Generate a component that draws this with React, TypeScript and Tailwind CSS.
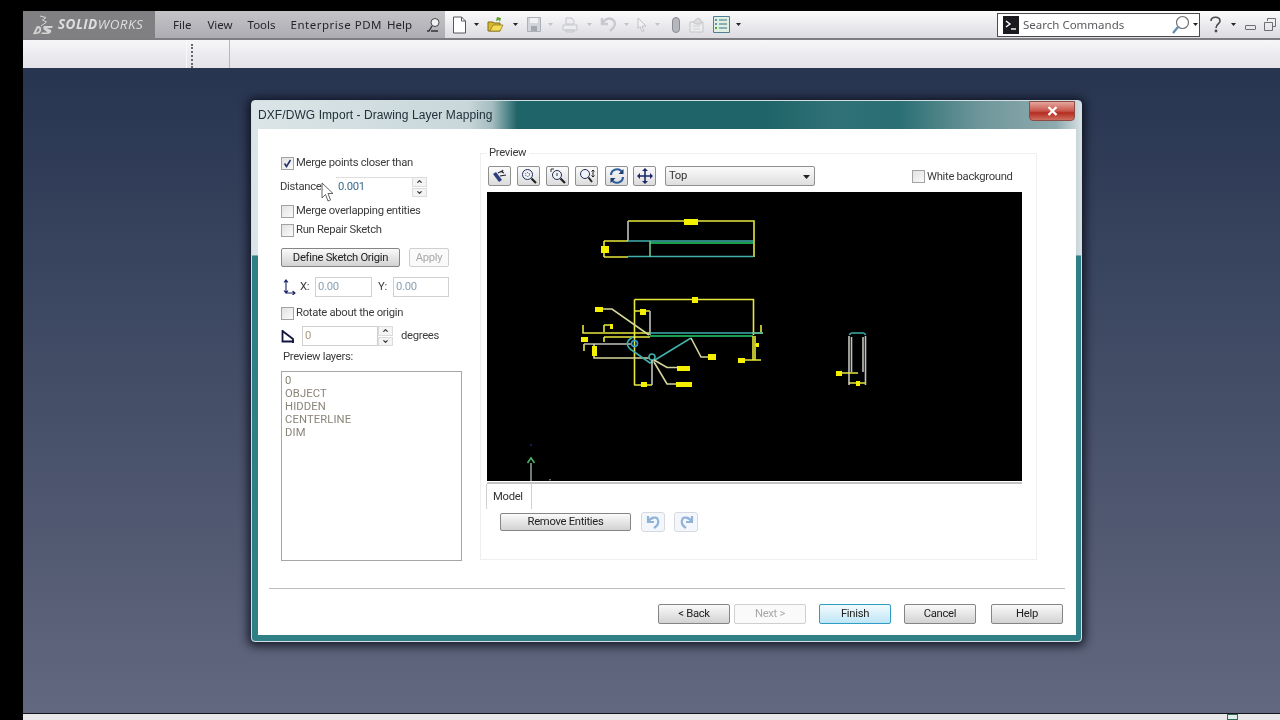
import { ReactNode } from "react";
import { ChevronDown, ChevronUp } from "lucide-react";

const Caret = ({ faded }: { faded?: boolean }) => (
  <svg width="5" height="3" viewBox="0 0 5 3" className="shrink-0">
    <path d="M0 0h5L2.5 3z" fill={faded ? "#c4c4c8" : "#222"} />
  </svg>
);

const Check = ({ checked }: { checked?: boolean }) => (
  <div className="flex h-[13px] w-[13px] shrink-0 items-center justify-center border border-[#a2a2a2] bg-gradient-to-br from-[#e2e2e2] to-[#fafafa]">
    {checked && (
      <svg width="9" height="9" viewBox="0 0 9 9">
        <path d="M1.5 4.5L3.5 7.5L7.5 1" fill="none" stroke="#27306b" strokeWidth="1.6" />
      </svg>
    )}
  </div>
);

const CheckRow = ({ label, checked }: { label: string; checked?: boolean }) => (
  <div className="flex h-[14px] items-center gap-[2px] whitespace-nowrap leading-[14px] text-[#3c3c3c]">
    <Check checked={checked} />
    <span>{label}</span>
  </div>
);

const Spinner = () => (
  <div className="flex h-[20px] w-[15px] shrink-0 flex-col gap-px">
    <div className="flex h-[9.5px] items-center justify-center border border-[#dcdcdc] bg-[#f4f4f4]">
      <ChevronUp size={7} strokeWidth={4} color="#333" />
    </div>
    <div className="flex h-[9.5px] items-center justify-center border border-[#dcdcdc] bg-[#f4f4f4]">
      <ChevronDown size={7} strokeWidth={4} color="#333" />
    </div>
  </div>
);

const Btn = ({ label, w, disabled, focus }: { label: string; w: string; disabled?: boolean; focus?: boolean }) => (
  <div
    className={
      w +
      " flex items-center justify-center whitespace-nowrap rounded-[2px] border pt-px " +
      (disabled
        ? "border-[#cfcfcf] bg-[#fafafa] text-[#a8a8a8]"
        : focus
          ? "border-[#2f9cc4] bg-gradient-to-b from-[#f2fafd] to-[#bfe6f6] text-[#222]"
          : "border-[#858585] bg-gradient-to-b from-[#fafafa] to-[#d2d2d2] text-[#222]")
    }
  >
    {label}
  </div>
);

const ToolBtn = ({ children }: { children: ReactNode }) => (
  <div className="flex h-[20px] w-[23px] shrink-0 items-center justify-center rounded-[2px] border border-[#8f8f8f] bg-gradient-to-b from-[#fbfbfb] to-[#dcdcdc]">
    {children}
  </div>
);

const Logo = () => (
  <div className="flex h-[27px] w-[132px] shrink-0 items-center bg-[#808083] pl-[9px]">
    <svg width="22" height="20" viewBox="0 0 22 20" className="shrink-0">
      <path d="M8 1L14 2.5L10.5 5L14.5 7L9 11" fill="none" stroke="#d4d4d4" strokeWidth="1" />
      <path d="M1 19L5 11H6C10 11 10 16 7.5 18C6 19 3 19.5 1 19zM4 17.5C6 17.5 7.5 16 7.5 14L6 13z" fill="#d4d4d4" fillRule="evenodd" />
      <path d="M12 11H21L20 13H14.5L19 15C20 17 18 19 15 19H9L10 17.5H15.5L11.5 14C11 12.5 11.5 11.5 12 11z" fill="#d4d4d4" />
    </svg>
    <span className="ml-[4px] mt-px whitespace-nowrap font-['Open_Sans',sans-serif] text-[13.5px] italic leading-none tracking-[0.45px] text-[#dedede]">
      <span className="font-bold">SOLID</span>WORKS
    </span>
  </div>
);

const TopToolbar = () => (
  <div className="flex h-[27px] flex-1 items-center bg-gradient-to-b from-[#fbfbfc] to-[#dcdce1] pl-[7px] pr-[4px]">
    <svg width="15" height="18" viewBox="0 0 15 18" className="shrink-0">
      <path d="M1.5 1h8l4 4v12h-12z" fill="#fff" stroke="#55585f" />
      <path d="M9.5 1v4h4" fill="none" stroke="#55585f" />
    </svg>
    <div className="ml-[7px]"><Caret /></div>
    <svg width="17" height="17" viewBox="0 0 17 17" className="ml-[8px] shrink-0">
      <path d="M1 6h5l1 1h6v8H1z" fill="#d8b92e" stroke="#846d18" />
      <path d="M3 15l3-6h10l-3 6z" fill="#f5dc58" stroke="#846d18" strokeWidth=".7" />
      <path d="M10 1l4 1-1 4-1-2-3 1z" fill="#56a32c" />
    </svg>
    <div className="ml-[9px]"><Caret /></div>
    <svg width="14" height="15" viewBox="0 0 14 15" className="ml-[9px] shrink-0">
      <path d="M.5.5h13v14H.5z" fill="#d2d4da" stroke="#aeb0b8" />
      <path d="M3 1h8v5H3z" fill="#f0f1f3" />
      <path d="M4 9h6v5H4z" fill="#a4a7ae" />
    </svg>
    <div className="ml-[7px]"><Caret faded /></div>
    <svg width="16" height="16" viewBox="0 0 16 16" className="ml-[9px] shrink-0">
      <path d="M4 1h6l2 3v3H4z M1 8h14v5H1z" fill="#ecedf0" stroke="#c4c5ca" />
      <path d="M4 13h8v2H4z" fill="#dddee2" stroke="#c4c5ca" />
    </svg>
    <div className="ml-[9px]"><Caret faded /></div>
    <svg width="17" height="15" viewBox="0 0 17 15" className="ml-[8px] shrink-0">
      <path d="M2 1v6h6M2 7c3-6 9-7 12-3 2 3 0 7-4 10" fill="none" stroke="#c8c9ce" strokeWidth="2.4" />
    </svg>
    <div className="ml-[7px]"><Caret faded /></div>
    <svg width="11" height="15" viewBox="0 0 11 15" className="ml-[8px] shrink-0">
      <path d="M1 1l8 8H5l2 5-2 .5-2-5-2 2z" fill="#f0f2f5" stroke="#c0c2c8" />
    </svg>
    <div className="ml-[7px]"><Caret faded /></div>
    <div className="ml-[12px] h-[16px] w-[8px] shrink-0 rounded-[4px] border border-[#8a8c92] bg-[#b6b8be]" />
    <svg width="17" height="16" viewBox="0 0 17 16" className="ml-[8px] shrink-0">
      <path d="M2 5h13v10H2z" fill="#eceded" stroke="#c4c5c8" />
      <path d="M5 5l5-4 3 2v4H8z" fill="#dcdde0" stroke="#c4c5c8" />
      <path d="M5 9h7M5 12h7" stroke="#cfd0d3" />
    </svg>
    <svg width="17" height="17" viewBox="0 0 17 17" className="ml-[8px] shrink-0">
      <path d="M.5.5h16v16H.5z" fill="#dff0e2" stroke="#4f7f95" />
      <path d="M6 4h8M6 8h8M6 12h8" stroke="#3d6c86" />
      <path d="M2 3h2v2H2zM2 7h2v2H2z" fill="#5a9bb7" />
      <path d="M2 11h2v2H2z" fill="#4aa83a" />
    </svg>
    <div className="ml-[6px]"><Caret /></div>
    <div className="flex-1" />
    <div className="flex h-[24px] w-[203px] shrink-0 items-center border border-[#4b4b4f] bg-white pl-[5px]">
      <div className="flex h-[18px] w-[16px] shrink-0 items-center justify-center bg-[#1b1b1f]">
        <svg width="12" height="12" viewBox="0 0 12 12">
          <path d="M1 2l4 3-4 3" fill="none" stroke="#fff" strokeWidth="1.4" />
          <path d="M6 10h5" stroke="#fff" strokeWidth="1.4" />
        </svg>
      </div>
      <span className="ml-[4px] w-[129px] shrink-0 whitespace-nowrap font-['Noto_Sans',sans-serif] text-[11.5px] text-[#5a5a5e]">Search Commands</span>
      <svg width="19" height="20" viewBox="0 0 19 20" className="ml-[19px] shrink-0">
        <circle cx="11.5" cy="7.5" r="6" fill="#fff" stroke="#6f7276" strokeWidth="1.2" />
        <path d="M7 12l-5 6" stroke="#5d8db3" strokeWidth="2.2" />
      </svg>
      <div className="ml-[3px]"><Caret /></div>
    </div>
    <svg width="13" height="17" viewBox="0 0 13 17" className="ml-[9px] shrink-0">
      <path d="M2 5c0-5 9-5 9 0 0 3-4 3-4 7" fill="none" stroke="#4a4a4e" strokeWidth="1.6" />
      <circle cx="7" cy="15" r="1.4" fill="#4a4a4e" />
    </svg>
    <div className="ml-[9px]"><Caret /></div>
    <div className="ml-[9px] mt-[6px] h-[5px] w-[11px] shrink-0 rounded-[1px] border border-[#6d6d72]" />
    <svg width="12" height="14" viewBox="0 0 12 14" className="ml-[8px] shrink-0">
      <path d="M3.5 3V.5h8v8H9M.5 4.5h8v8h-8z" fill="none" stroke="#6d6d72" />
    </svg>
  </div>
);

const Blk = ({ x, y, w, h }: { x: number; y: number; w: number; h: number }) => (
  <rect x={x} y={y} width={w} height={h} fill="#f5f000" />
);

const Preview = () => {
  const Y = "#e8e83c";
  const B = "#d6d69c";
  const G = "#c0c3ba";
  const T = "#3fb0ac";
  const E = "#22d36a";
  return (
    <svg viewBox="487 192 535 289" className="ml-[-1px] mt-[6px] block h-[289px] w-[535px] shrink-0 bg-black" fill="none" strokeWidth="1.6">
      {/* top view */}
      <path d="M628 221H754V257" stroke={Y} />
      <path d="M628 221V241" stroke={G} />
      <path d="M604 241V257M604 241H628M604 257H628" stroke={Y} />
      <path d="M628 241H753M628 256.5H753" stroke={T} />
      <path d="M650 243H753" stroke={E} />
      <path d="M650 241V257" stroke="#6fc48e" />
      <Blk x={684} y={219} w={14} h={6} />
      <Blk x={601} y={246} w={8} h={7} />
      {/* front view */}
      <path d="M634.5 299.5H753.5V335M634.5 299.5V385M583 325V333H650M604 325V332M604 325H612M612 324V329" stroke={Y} />
      <path d="M763 333H752M761 325V333M604 337V342M604 337H650M584 344V351M634 311H650" stroke={Y} />
      <path d="M603 309H612L649 335" stroke={B} />
      <path d="M650 311V335M584 344H632" stroke={G} />
      <path d="M594 344V358H649" stroke={B} />
      <path d="M650 333H763" stroke={T} />
      <path d="M650 336H753" stroke={E} />
      <circle cx="634.5" cy="343.5" r="3" stroke="#2f9fe0" />
      <circle cx="652" cy="357" r="3" stroke={T} />
      <path d="M633 337C625 341 626 347 633 351L650 363L691 338" stroke={T} />
      <path d="M691 338L701 357H708M654 360L667 367.5H677M654 362L667 384H676" stroke={B} />
      <path d="M652 360V385" stroke={G} />
      <path d="M634 385H652M753 336V360M755 336V360M745 360H761M755 345H759" stroke={Y} />
      <Blk x={595} y={307} w={8} h={5} />
      <Blk x={640} y={309} w={6} h={6} />
      <Blk x={692} y={297} w={6} h={6} />
      <Blk x={610} y={324} w={3} h={5} />
      <Blk x={581} y={337} w={7} h={5} />
      <Blk x={592} y={346} w={5} h={10} />
      <Blk x={708} y={354} w={8} h={6} />
      <Blk x={677} y={366} w={13} h={5} />
      <Blk x={676} y={382} w={16} h={5} />
      <Blk x={641} y={382} w={6} h={5} />
      <Blk x={738} y={358} w={7} h={5} />
      <Blk x={756} y={343} w={3} h={4} />
      {/* side view */}
      <path d="M849 336V385M865.5 336V385M851.5 337V372M863 337V372" stroke={G} />
      <path d="M849.5 335Q850 333 852 333H863Q865 333 865.5 335" stroke={T} />
      <path d="M842 373H858M849 383H865" stroke={Y} />
      <Blk x={836} y={371} w={6} h={5} />
      <Blk x={856} y={381} w={4} h={5} />
      {/* origin */}
      <path d="M531 463V481" stroke="#8f9a90" />
      <path d="M527.5 463L531 458L534.5 463" stroke="#4fae67" />
      <rect x="530" y="444" width="2" height="2" fill="#0c1c5c" />
      <rect x="549" y="479" width="2" height="1.5" fill="#666" />
    </svg>
  );
};

const LeftColumn = () => (
  <div className="w-[181px] shrink-0 pt-[27px]">
    <CheckRow label="Merge points closer than" checked />
    <div className="relative mt-[7px] flex h-[20px] items-center text-[#3c3c3c]">
      <span className="ml-[-1px] w-[56px]">Distance:</span>
      <div className="flex h-[20px] w-[76px] items-center border-t border-[#dedede] pl-[2px] text-[#3d6c8e]">0.001</div>
      <Spinner />
      {/* cursor */}
      <svg width="13" height="21" viewBox="0 0 13 21" className="absolute left-[40px] top-[5px]">
        <path d="M1 1V16L4.5 12.5L7 19L9.5 18L7 11.5H12z" fill="#fff" fillOpacity=".75" stroke="#555" strokeWidth=".9" />
      </svg>
    </div>
    <div className="mt-[7px]"><CheckRow label="Merge overlapping entities" /></div>
    <div className="mt-[5px]"><CheckRow label="Run Repair Sketch" /></div>
    <div className="mt-[11px] flex h-[19px] gap-[9px]">
      <Btn label="Define Sketch Origin" w="w-[119px]" />
      <Btn label="Apply" w="w-[40px]" disabled />
    </div>
    <div className="mt-[10px] flex h-[20px] items-center text-[#3c3c3c]">
      <svg width="14" height="16" viewBox="0 0 14 16" className="ml-px shrink-0">
        <path d="M4 1V14H13M2 3.5L4 1L6 3.5M2 11.5L4 14L6 11.5M10.5 12L13 14L10.5 16" fill="none" stroke="#1b2466" strokeWidth="1.1" />
      </svg>
      <span className="ml-[4px] w-[15px] shrink-0">X:</span>
      <div className="flex h-[20px] w-[57px] shrink-0 items-center border border-[#d0d0d0] pl-[2px] text-[#8fa3b3]">0.00</div>
      <span className="ml-[6px] w-[15px] shrink-0">Y:</span>
      <div className="flex h-[20px] w-[56px] shrink-0 items-center border border-[#d0d0d0] pl-[2px] text-[#8fa3b3]">0.00</div>
    </div>
    <div className="mt-[9px]"><CheckRow label="Rotate about the origin" /></div>
    <div className="mt-[6px] flex h-[20px] items-center text-[#3c3c3c]">
      <svg width="14" height="15" viewBox="0 0 14 15" className="shrink-0">
        <path d="M1.5 1V12.5H13M1.5 2L12 10V14" fill="none" stroke="#14143c" strokeWidth="1.8" />
      </svg>
      <div className="ml-[7px] flex h-[20px] w-[76px] shrink-0 items-center border border-[#d0d0d0] pl-[2px] text-[#a89a80]">0</div>
      <Spinner />
      <span className="ml-[8px]">degrees</span>
    </div>
    <div className="mt-[4px] h-[14px] pl-[2px] leading-[14px] text-[#3c3c3c]">Preview layers:</div>
    <div className="mt-[7px] h-[190px] border border-[#a6a6a6] px-[3px] pt-[2px] leading-[13px] tracking-[0.1px] text-[#8a8578]">
      <div>0</div>
      <div>OBJECT</div>
      <div>HIDDEN</div>
      <div>CENTERLINE</div>
      <div>DIM</div>
    </div>
  </div>
);

const PreviewPanel = () => (
  <div className="relative ml-[18px] mt-[24px] h-[407px] w-[557px] shrink-0 border border-[#efefef] pl-[7px] pt-[12px]">
    <div className="absolute left-[5px] top-[-8px] bg-white px-[3px] leading-[14px] text-[#3c3c3c]">Preview</div>
    <div className="flex h-[20px] items-center">
      <ToolBtn>
        <svg width="16" height="16" viewBox="0 0 16 16">
          <path d="M1 6l6 8 3-2-6-8z" fill="#2c3f7c" />
          <path d="M6 5l4-2M8 8l6-1M11 2l-1 2 2 1" fill="none" stroke="#223" strokeWidth="1.2" />
        </svg>
      </ToolBtn>
      <div className="ml-[6px]">
        <ToolBtn>
          <svg width="16" height="16" viewBox="0 0 16 16">
            <circle cx="6.5" cy="6.5" r="5" fill="#eef3f7" stroke="#222d55" />
            <circle cx="6.5" cy="6.5" r="2" fill="none" stroke="#444" strokeDasharray="1 1" />
            <path d="M10.5 10.5L15 15" stroke="#222" strokeWidth="2.2" />
          </svg>
        </ToolBtn>
      </div>
      <div className="ml-[6px]">
        <ToolBtn>
          <svg width="16" height="16" viewBox="0 0 16 16">
            <circle cx="7" cy="7" r="4.5" fill="#eef3f7" stroke="#222d55" />
            <path d="M1 1h3M1 1v3M7 5v3" fill="none" stroke="#333" />
            <path d="M10.5 10.5L15 15" stroke="#222" strokeWidth="2.2" />
          </svg>
        </ToolBtn>
      </div>
      <div className="ml-[6px]">
        <ToolBtn>
          <svg width="16" height="16" viewBox="0 0 16 16">
            <circle cx="6" cy="6" r="4.5" fill="#eef3f7" stroke="#222d55" />
            <path d="M9.5 9.5L13 14" stroke="#222" strokeWidth="2" />
            <path d="M14 2v7M12.5 3.5L14 2l1.5 1.5M12.5 7.5L14 9l1.5-1.5" fill="none" stroke="#222" />
          </svg>
        </ToolBtn>
      </div>
      <div className="ml-[7px]">
        <ToolBtn>
          <svg width="16" height="16" viewBox="0 0 16 16">
            <path d="M2 7A6 6 0 0 1 13 4" fill="none" stroke="#2f5f9e" strokeWidth="2.2" />
            <path d="M14 9A6 6 0 0 1 3 12" fill="none" stroke="#2f5f9e" strokeWidth="2.2" />
            <path d="M14.5 1v5h-5zM1.5 15v-5h5z" fill="#1f3d73" />
          </svg>
        </ToolBtn>
      </div>
      <div className="ml-[5px]">
        <ToolBtn>
          <svg width="16" height="16" viewBox="0 0 16 16">
            <path d="M8 1v14M1 8h14" stroke="#1a2a66" strokeWidth="1.6" />
            <path d="M8 0l3 3H5zM8 16l3-3H5zM0 8l3-3v6zM16 8l-3-3v6z" fill="#1a2a66" />
          </svg>
        </ToolBtn>
      </div>
      <div className="ml-[9px] flex h-[20px] w-[150px] shrink-0 items-center justify-between rounded-[2px] border border-[#8f8f8f] bg-gradient-to-b from-[#fbfbfb] to-[#dedede] pl-[3px] pr-[4px] pt-px text-[#333]">
        <span>Top</span>
        <svg width="7" height="4" viewBox="0 0 7 4"><path d="M0 0h7L3.5 4z" fill="#222" /></svg>
      </div>
      <div className="ml-[97px] mt-px"><CheckRow label="White background" /></div>
    </div>
    <Preview />
    <div className="ml-[-1px] mt-[1px] h-[2px] w-[535px] bg-[#c4c4c4]" />
    <div className="ml-[-2px] flex h-[25px] w-[46px] items-center border-l border-r border-[#d0d0d0] pl-[6px] pt-[2px] text-[#333]">Model</div>
    <div className="ml-[12px] mt-[3px] flex h-[20px] items-center">
      <Btn label="Remove Entities" w="w-[131px] h-[18px]" />
      <div className="ml-[10px] flex h-[20px] w-[24px] items-center justify-center rounded-[3px] border border-[#d6d9de] bg-[#f3f6fa]">
        <svg width="15" height="15" viewBox="0 0 15 15">
          <path d="M2 1v6h6M2 7c3-5 9-6 10-2 1 3-1 6-4 8" fill="none" stroke="#8fb2d8" strokeWidth="2.2" />
        </svg>
      </div>
      <div className="ml-[9px] flex h-[20px] w-[24px] items-center justify-center rounded-[3px] border border-[#d6d9de] bg-[#f3f6fa]">
        <svg width="15" height="15" viewBox="0 0 15 15">
          <path d="M13 1v6H7M13 7C10 2 4 1 3 5c-1 3 1 6 4 8" fill="none" stroke="#8fb2d8" strokeWidth="2.2" />
        </svg>
      </div>
    </div>
  </div>
);

const Dialog = () => (
  <div className="relative h-[542px] w-[831px] rounded-[4px] border border-[#d2dfe1] bg-[linear-gradient(180deg,rgba(47,128,134,0)_28.5%,#2f8086_28.7%),linear-gradient(90deg,#dbe5e7_0%,#c9d7da_26%,#a4bcc0_29%,#1f6468_32%,#1f6468_62%,#2f7176_70%,#2a6f74_78%,#6f979b_88%,#8eaaae_97%,#d5e0e2_100%)] pl-[6px] pr-[5px] pt-[28px] shadow-[0_1px_10px_3px_rgba(8,10,24,0.8)]">
    <div className="absolute left-[6px] top-[6.5px] whitespace-nowrap text-[12px] leading-[15px] tracking-[0.08px] text-[#20303a]">DXF/DWG Import - Drawing Layer Mapping</div>
    <div className="absolute right-[6px] top-0 flex h-[20px] w-[46px] items-center justify-center rounded-b-[4px] border border-[#8e4a44] bg-[linear-gradient(#e5a79f,#c9564a_50%,#b32c20_60%,#cf6f60)]">
      <svg width="11" height="10" viewBox="0 0 11 10"><path d="M1.5 1L9.5 9M9.5 1L1.5 9" stroke="#fff" strokeWidth="2.4" /></svg>
    </div>
    <div className="h-[506px] w-[818px] bg-white font-['Roboto',sans-serif] text-[11.25px] tracking-[-0.3px]">
      <div className="flex h-[459px] pl-[23px]">
        <LeftColumn />
        <PreviewPanel />
      </div>
      <div className="mx-[11px] h-px bg-[#bdbdbd]" />
      <div className="mt-[15px] flex h-[20px] justify-end pr-[13px]">
        <Btn label="< Back" w="w-[72px]" />
        <div className="ml-[4px] flex"><Btn label="Next >" w="w-[72px]" disabled /></div>
        <div className="ml-[13px] flex"><Btn label="Finish" w="w-[72px]" focus /></div>
        <div className="ml-[13px] flex"><Btn label="Cancel" w="w-[72px]" /></div>
        <div className="ml-[15px] flex"><Btn label="Help" w="w-[72px]" /></div>
      </div>
    </div>
  </div>
);

export default function App() {
  return (
    <div className="h-[720px] w-[1280px] overflow-hidden bg-black pl-[23px] pt-[11px] font-['Liberation_Sans',Arial,sans-serif] blur-[0.35px]">
      <div className="flex h-[27px]">
        <Logo />
        <div className="flex h-[27px] w-[290px] shrink-0 items-center whitespace-nowrap bg-gradient-to-b from-[#c4c4c8] to-[#acacb2] pl-[18px] font-['Noto_Sans',sans-serif] text-[11.5px] text-[#26262a]">
          <span>File</span>
          <span className="ml-[16px]">View</span>
          <span className="ml-[15px]">Tools</span>
          <span className="ml-[15px] tracking-[0.5px]">Enterprise PDM</span>
          <span className="ml-[5px]">Help</span>
          <svg width="15" height="16" viewBox="0 0 15 16" className="ml-[14px] shrink-0">
            <circle cx="9" cy="5.5" r="4" fill="#f2f2f2" stroke="#444" />
            <path d="M6 9L3 14H1M5 14H12" fill="none" stroke="#333" strokeWidth="1.3" />
          </svg>
        </div>
        <TopToolbar />
      </div>
      <div className="h-[2px] bg-[#7d7d82]" />
      <div className="flex h-[28px] bg-gradient-to-b from-[#f6f6f8] to-[#e3e3e8]">
        <div className="w-[164px] border-r border-[#f8f8f8]" />
        <div className="flex w-[43px] items-start border-r border-[#b8b8bc] pl-[4px]">
          <div className="mt-[4px] h-[24px] border-l-2 border-dotted border-[#66666c]" />
        </div>
      </div>
      <div className="h-[645px] bg-gradient-to-b from-[#283550] to-[#62687f] pl-[228px] pt-[32px]">
        <Dialog />
      </div>
      <div className="flex h-[7px] items-start justify-end border-t border-[#14141c] bg-[#e8e8ea] pr-[42px]">
        <div className="h-[6px] w-[11px] border border-[#2e6a5c] bg-[#dfeee6]" />
      </div>
    </div>
  );
}
